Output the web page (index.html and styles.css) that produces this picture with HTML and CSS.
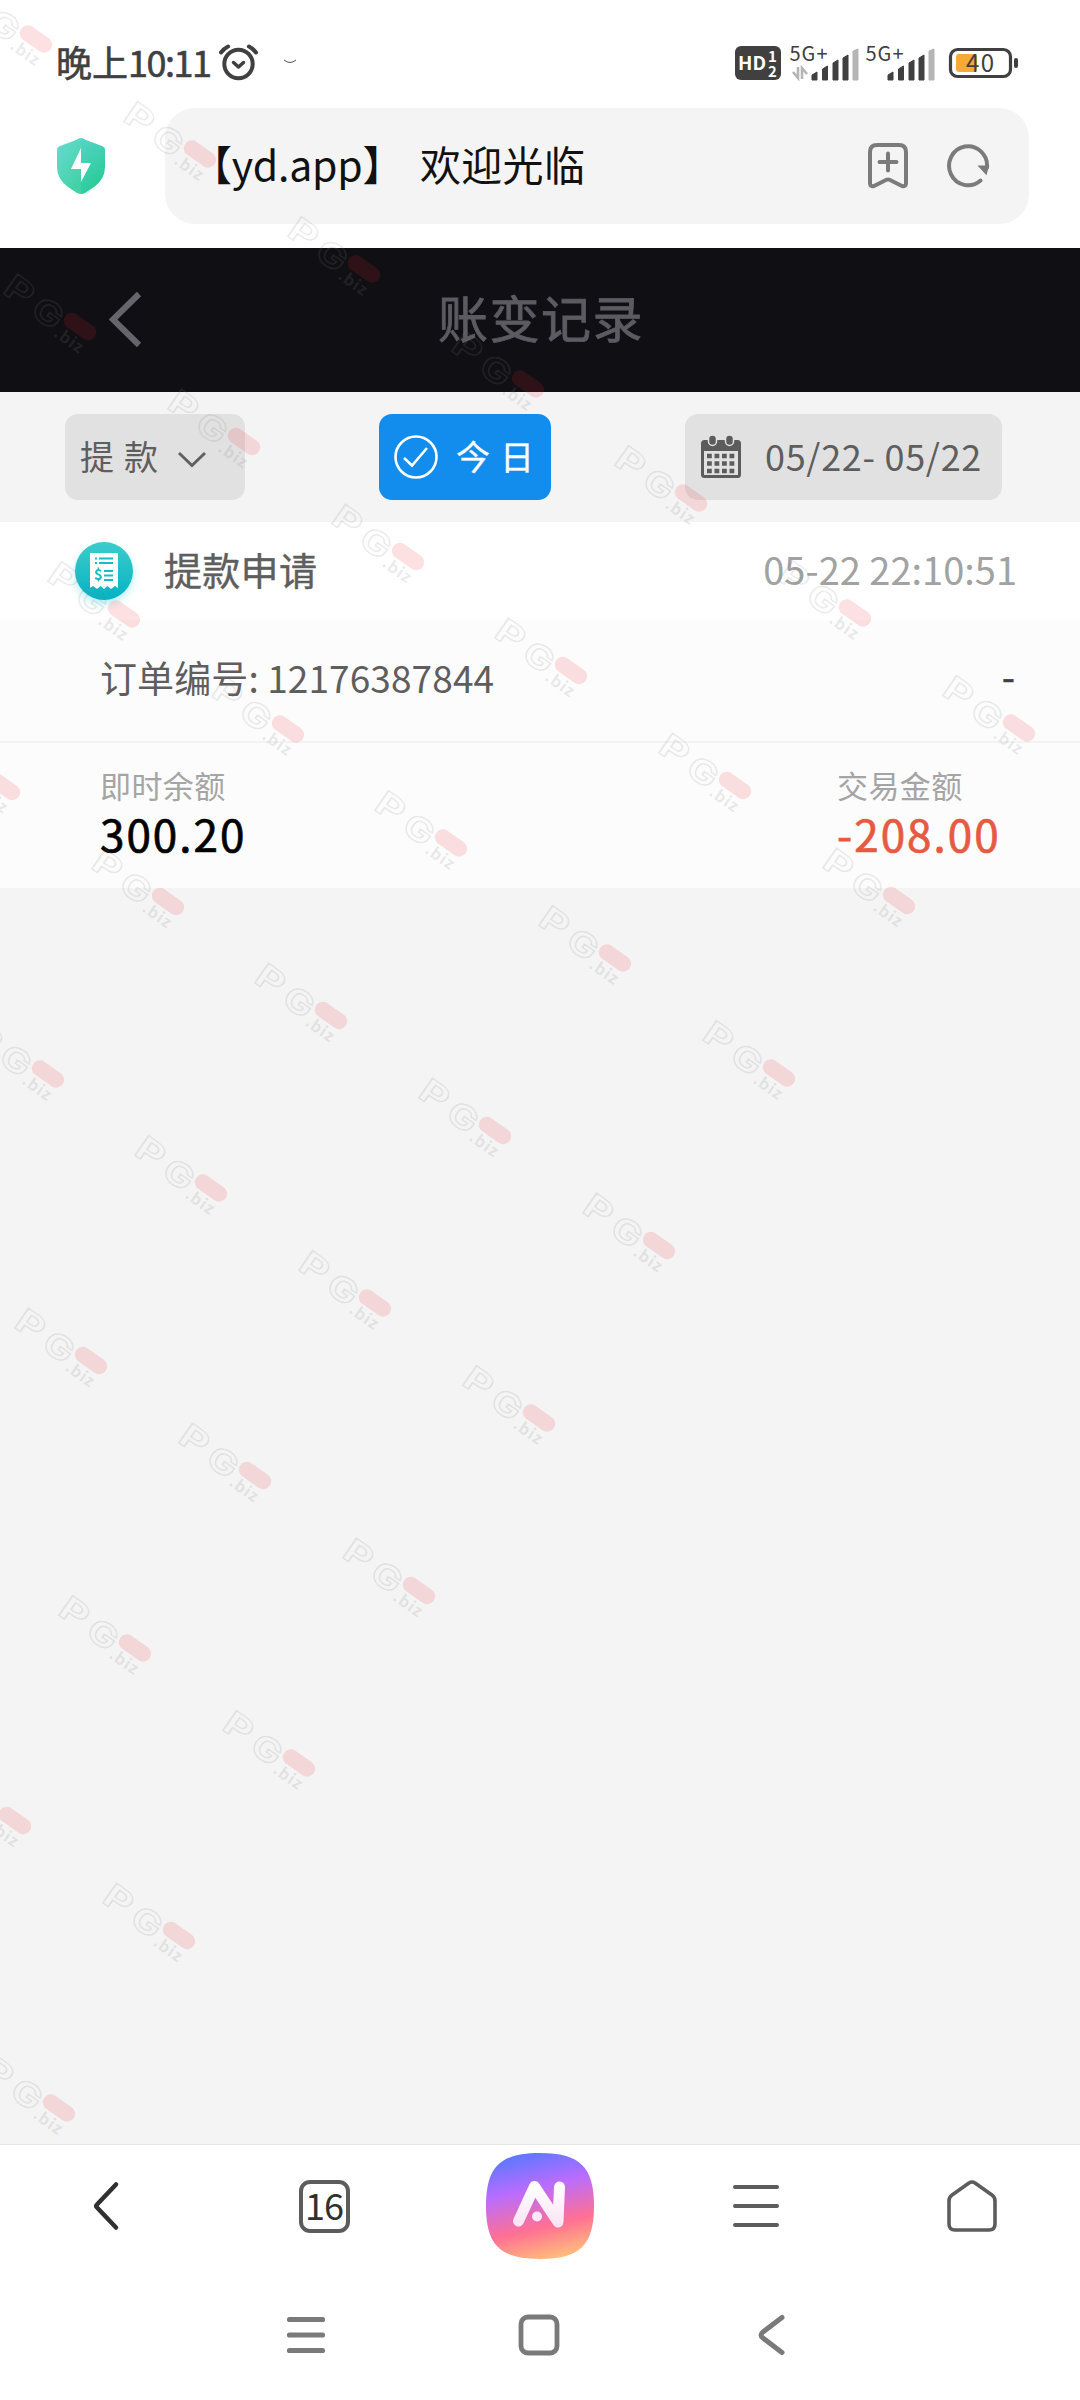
FILE: index.html
```html
<!DOCTYPE html>
<html lang="zh-CN">
<head>
<meta charset="utf-8">
<title>账变记录</title>
<link rel="stylesheet" href="styles.css">
</head>
<body>
<div class="screen">
  <header class="status">
    <span class="clock"><span>晚上</span><span class="digits">10:11</span></span>
    <svg class="alarm" width="40" height="38" viewBox="218 44 40 38" fill="none" stroke="#404040" stroke-linecap="round" stroke-linejoin="round">
      <circle cx="238.500" cy="64" r="14.200" stroke-width="4"/>
      <path d="M233.500 62.500l5 4.500 5-4.500" stroke-width="3.500"/>
      <path d="M221 52.500q3-4 7-6M256 52.500q-3-4-7-6" stroke-width="4"/>
    </svg>
    <svg class="squiggle" width="14" height="6" viewBox="0 0 14 6" fill="none" stroke="#555"><path d="M1 1q6 5 12 0"/></svg>
    <svg class="indicators" width="286" height="40" viewBox="734 43 286 40">
      <rect x="735" y="46" width="46" height="34" rx="6" fill="#404040"/>
      <g class="hd">
        <text x="738" y="70" font-size="18" textLength="28" lengthAdjust="spacingAndGlyphs">HD</text>
        <text x="768" y="61.500" font-size="15">1</text>
        <text x="768" y="76.500" font-size="15">2</text>
      </g>
      <path d="M798 67v11l-5-6M802 79v-11l5 6" fill="none" stroke="#b5b5b5" stroke-width="2.600"/>
      <g id="signal">
        <text class="net" x="789.500" y="60.500" font-size="20" textLength="38">5G+</text>
        <path fill="#404040" d="M812 80v-5l5-3v8zM822.500 80V69l5-3v14zM833 80V63l5-3v20zM843 80V58l5-3v25z" stroke="#404040" stroke-linejoin="round"/>
        <path fill="#b5b5b5" d="M853 80V51l5-2v31z" stroke="#b5b5b5"/>
      </g>
      <use href="#signal" x="76"/>
      <rect x="950.500" y="49.500" width="60" height="27" rx="7" fill="none" stroke="#404040" stroke-width="3.200"/>
      <rect x="956" y="54" width="21" height="18" rx="3" fill="#f5a937"/>
      <rect x="1014" y="58" width="4" height="10" rx="2" fill="#404040"/>
      <text class="net" x="966" y="72" font-size="24" textLength="28">40</text>
    </svg>
  </header>

  <div class="browser">
    <svg class="shield" width="48" height="58" viewBox="0 0 48 58">
      <defs><linearGradient id="sh" x1="0" y1="0" x2=".6" y2="1"><stop offset="0" stop-color="#67dcd3"/><stop offset="1" stop-color="#43d1a6"/></linearGradient>
      <linearGradient id="sh2" x1="0" y1="0" x2=".4" y2="1"><stop offset="0" stop-color="#55d4c8"/><stop offset="1" stop-color="#2acb97"/></linearGradient></defs>
      <path d="M24 1Q22 1 19 3L3 9Q0 10 0 13V30Q0 42 11 50L20 56Q22 57 24 57z" fill="url(#sh)"/>
      <path d="M24 1Q26 1 29 3L45 9Q48 10 48 13V30Q48 42 37 50L28 56Q26 57 24 57z" fill="url(#sh2)"/>
      <path d="M24 11L14 32h10v13L34 26H24z" fill="#fff"/>
    </svg>
    <div class="address">
      <span class="url">【yd.app】</span><span class="site">欢迎光临</span>
      <svg width="42" height="48" viewBox="867 142 42 48" fill="none" stroke="#7b7b7b" stroke-width="4" stroke-linejoin="round" stroke-linecap="round">
        <path d="M870 183V152q0-7 7-7h22q7 0 7 7v31q0 4-4 3l-10-5q-4-3-8 0l-10 5q-4 1-4-3zM879.500 162h17M888 153.500v17"/>
      </svg>
      <svg class="reload" width="46" height="46" viewBox="945 143 46 46" fill="none" stroke="#7b7b7b" stroke-width="4" stroke-linecap="round">
        <path d="M980.500 180.500a19 19.500 0 1 1 6.500-13"/>
        <path d="M979.500 166.500h8.500l-2 7z" fill="#7b7b7b" stroke-width="1.800"/>
      </svg>
    </div>
  </div>

  <nav class="titlebar">
    <svg width="34" height="58" viewBox="0 0 34 58" fill="none" stroke="#66656b" stroke-width="6"><path d="M31 3L5 28.500 31 54"/></svg>
    <h1>账变记录</h1>
  </nav>

  <section class="filters">
    <button class="filter type"><span>提款</span>
      <svg width="30" height="18" viewBox="0 0 30 18" fill="none" stroke="#606060" stroke-width="3"><path d="M2 2l13 12.500L28 2"/></svg>
    </button>
    <button class="filter today">
      <svg width="46" height="46" viewBox="0 0 46 46" fill="none" stroke="#fff" stroke-width="2.600"><circle cx="23" cy="23" r="20.500"/><path d="M11 24l8 7.500 15-17.500"/></svg>
      <span>今日</span>
    </button>
    <button class="filter range">
      <svg width="40" height="44" viewBox="0 0 40 44">
        <rect x="1.500" y="6.500" width="37" height="35" rx="2" fill="none" stroke="#5c5c5c" stroke-width="3"/>
        <path d="M1 7h38v9H1z" fill="#5c5c5c"/>
        <rect x="7.500" y="0" width="8" height="10.500" rx="4" fill="#5c5c5c" stroke="#e1e1e1" stroke-width="1.500"/>
        <rect x="24.500" y="0" width="8" height="10.500" rx="4" fill="#5c5c5c" stroke="#e1e1e1" stroke-width="1.500"/>
        <path d="M6 21h28M6 28.500h28M6 36h28" stroke="#5c5c5c" stroke-width="4.500" stroke-dasharray="4.800 2.700"/>
      </svg>
      <span>05/22- 05/22</span>
    </button>
  </section>

  <article class="record">
    <header class="head">
      <svg class="receipt" width="76" height="76" viewBox="0 0 76 76">
        <defs><linearGradient id="rc" x1="0" y1="0" x2="0" y2="1"><stop offset="0" stop-color="#3cccca"/><stop offset="1" stop-color="#06b2c4"/></linearGradient></defs>
        <circle cx="38" cy="38" r="29" fill="url(#rc)"/>
        <path d="M24 20h28v35l-3-2-4 3-3.500-3-3.500 3-3.500-3-3.500 3-4-3-3 2z" fill="#fff"/>
        <path d="M29 25.500h2M33 25.500h14M29 30h2M33 30h14M38 38h9M38 42.500h9M38 47h9" stroke="#19bcc7" stroke-width="2"/>
        <text x="28" y="47" font-size="15">$</text>
      </svg>
      <h2>提款申请</h2>
      <time>05-22 22:10:51</time>
    </header>
    <div class="order"><span>订单编号: 12176387844</span><span class="dash">-</span></div>
    <div class="amounts">
      <dl><dt>即时余额</dt><dd>300.20</dd></dl>
      <dl class="trade"><dt>交易金额</dt><dd>-208.00</dd></dl>
    </div>
  </article>

  <main class="blank"></main>

  <nav class="toolbar">
    <div><svg width="54" height="54" viewBox="81 2180 54 54" fill="none" stroke="#303030" stroke-width="4.500" stroke-linecap="round" stroke-linejoin="round"><path d="M116 2185.500l-19 20q-1.500 1.500 0 3l19 20"/></svg></div>
    <div><span class="tabs">16</span></div>
    <div><svg width="108" height="106" viewBox="0 0 108 106">
      <defs><linearGradient id="ai" x1=".35" y1="0" x2=".6" y2="1"><stop offset="0" stop-color="#5d78ff"/><stop offset=".33" stop-color="#b96cff"/><stop offset=".7" stop-color="#ff7093"/><stop offset="1" stop-color="#ffbc7c"/></linearGradient>
      <linearGradient id="aw" x1="0" y1="0" x2="0" y2="1"><stop offset="0" stop-color="#fff"/><stop offset="1" stop-color="#fbe5f5"/></linearGradient></defs>
      <path d="M54 0C94 0 108 14 108 53S94 106 54 106 0 92 0 53 14 0 54 0z" fill="url(#ai)"/>
      <path d="M32.500 68L48.500 33.500 72 69 73.500 34" fill="none" stroke="url(#aw)" stroke-width="11" stroke-linecap="round" stroke-linejoin="round"/>
      <circle cx="51" cy="63.500" r="5" fill="#fbe8f8"/>
    </svg></div>
    <div><svg width="48" height="44" viewBox="0 0 48 44" stroke="#5c5c5c" stroke-width="4" stroke-linecap="round"><path d="M3 3h42M3 22h42M3 41h42"/></svg></div>
    <div><svg width="52" height="54" viewBox="0 0 52 54" fill="none" stroke="#5c5c5c" stroke-width="3.600" stroke-linejoin="round"><path d="M3 22q0-4 3-6L23 4q3-2 6 0l17 12q3 2 3 6v23q0 6-6 6H9q-6 0-6-6z"/></svg></div>
  </nav>

  <footer class="system" aria-label="navigation">
    <div><svg width="40" height="38" viewBox="0 0 40 38" stroke="#7a7a7a" stroke-width="5.200" stroke-linecap="round"><path d="M3.500 3.500h33M3.500 19h33M3.500 34.500h33"/></svg></div>
    <div><svg width="42" height="42" viewBox="0 0 42 42" fill="none" stroke="#7a7a7a" stroke-width="4.800"><rect x="3" y="3" width="36" height="36" rx="7"/></svg></div>
    <div><svg width="28" height="42" viewBox="0 0 28 42" fill="none" stroke="#7a7a7a" stroke-width="5" stroke-linecap="round"><path d="M24 3.500L5 18q-4 3 0 6l19 14.500"/></svg></div>
  </footer>

  <svg class="watermarks" width="1080" height="2400" viewBox="0 0 1080 2400" aria-hidden="true">
    <defs>
      <g id="mark">
        <g transform="rotate(35)">
          <text class="logo" x="-84" y="17" font-size="33" textLength="28" lengthAdjust="spacingAndGlyphs">P</text>
          <text class="logo" x="-49" y="19" font-size="33" textLength="30" lengthAdjust="spacingAndGlyphs">G</text>
          <rect x="-18" y="-8" width="36" height="16" rx="8" fill="#f02035" fill-opacity=".14"/>
          <text class="biz" x="-17" y="23" font-size="16">.biz</text>
        </g>
      </g>
      <g id="row">
        <use href="#mark" x="36" y="39"/>
        <use href="#mark" x="200" y="154"/>
        <use href="#mark" x="364" y="269"/>
        <use href="#mark" x="528" y="384"/>
        <use href="#mark" x="691" y="498"/>
        <use href="#mark" x="855" y="613"/>
        <use href="#mark" x="1019" y="728"/>
      </g>
    </defs>
    <use href="#row"/>
    <use href="#row" x="-120" y="172.500"/>
    <use href="#row" x="-240" y="345"/>
    <use href="#row" x="-360" y="517.500"/>
    <use href="#row" x="-480" y="690"/>
    <use href="#row" x="-600" y="862.500"/>
    <use href="#row" x="-720" y="1035"/>
    <use href="#row" x="-840" y="1207.500"/>
    <use href="#row" x="-960" y="1380"/>
  </svg>
</div>
</body>
</html>
```
FILE: styles.css
```css
* { box-sizing: border-box; margin: 0; padding: 0; }
body { background: #fff; font-family: "Noto Sans CJK SC", "Noto Sans", sans-serif; }
svg { display: block; flex: none; }
.screen { position: relative; width: 1080px; height: 2400px; overflow: hidden; display: flex; flex-direction: column; color: #5e5e5e; }

.status { height: 108px; padding: 0 60px 0 56px; display: flex; align-items: flex-start; }
.clock { display: flex; width: 162px; margin-top: 34px; font-size: 36px; line-height: 54px; color: #404040; white-space: nowrap; -webkit-text-stroke: .6px #404040; }
.clock .digits { letter-spacing: -1.5px; }
.alarm { margin-top: 44px; }
.squiggle { margin: 59px 0 0 25px; }
.indicators { margin: 43px 0 0 auto; }
.hd { fill: #fff; font-weight: 700; }
.net { fill: #404040; }

.browser { height: 140px; padding: 0 51px 24px 57px; display: flex; align-items: center; }
.address { margin-left: 60px; width: 864px; height: 116px; border-radius: 30px; background: #f4f4f4; display: flex; align-items: center; padding: 0 38px 0 26px; font-size: 41px; color: #111; white-space: nowrap; }
.url, .site { padding-bottom: 6px; }
.url { letter-spacing: -.2px; width: 229px; }
.site { margin-right: auto; letter-spacing: .3px; }
.reload { margin-left: 36px; }

.titlebar { height: 144px; background: #101014; display: grid; grid-template-columns: 34px 1fr 34px; align-items: center; padding: 0 106px 0 108px; }
.titlebar h1 { padding-bottom: 8px; text-align: center; font-size: 50px; font-weight: 400; letter-spacing: 1.5px; color: #5c5b61; -webkit-text-stroke: .8px #5c5b61; }

.filters { height: 130px; padding: 22px 78px 22px 65px; background: #f4f4f4; display: flex; justify-content: space-between; }
.filter { border: 0; border-radius: 13px; height: 86px; background: #e1e1e1; color: #5e5e5e; font: inherit; font-size: 34px; display: flex; align-items: center; white-space: nowrap; }
.filter span { padding-bottom: 4px; }
.type { width: 180px; padding-left: 15px; }
.type span { letter-spacing: 10px; }
.type svg { margin: 6px 0 0 9px; }
.today { width: 172px; padding-left: 14px; background: #128ced; color: #fff; }
.today span { margin-left: 17px; letter-spacing: 10px; -webkit-text-stroke: .3px #fff; }
.range { width: 317px; padding-left: 16px; font-size: 36px; }
.range span { margin-left: 24px; letter-spacing: .7px; }

.record { height: 366px; background: #fcfcfc; }
.head { height: 98px; padding: 0 63px 0 66px; background: #fff; display: flex; align-items: center; }
.receipt { filter: drop-shadow(0 4px 4px #b5eef5); }
.receipt text { fill: #19bcc7; font-weight: 700; }
.head h2, .head time { padding-bottom: 6px; }
.head h2 { margin-left: 22px; font-size: 38px; font-weight: 400; letter-spacing: .3px; -webkit-text-stroke: .4px #5e5e5e; }
.head time { margin-left: auto; font-size: 38px; letter-spacing: 0; color: #a2a2a2; }
.order { height: 123px; padding: 0 65px 8px 100px; border-bottom: 2px solid #f3f3f3; display: flex; align-items: center; justify-content: space-between; font-size: 37px; letter-spacing: .1px; }
.dash { color: #404040; -webkit-text-stroke: .6px #404040; padding-bottom: 4px; }
.amounts { display: flex; justify-content: space-between; padding: 18px 0 0 100px; }
.trade { width: 243px; }
dt { font-size: 31px; line-height: 48px; letter-spacing: .4px; color: #a5a5a5; }
dd { font-size: 44px; line-height: 49px; letter-spacing: 2px; color: #000; -webkit-text-stroke: .7px currentColor; }
.trade dd { color: #e65a43; }

.blank { flex: 1; background: #f4f4f4; }
.toolbar { height: 126px; padding-bottom: 3px; border-top: 1px solid #e4e4e0; display: grid; grid-template-columns: repeat(5, 216px); align-items: center; justify-items: center; }
.tabs { display: flex; width: 51px; height: 53px; padding-bottom: 5px; align-items: center; justify-content: center; border: 4px solid #5c5c5c; border-radius: 11px; font-size: 36px; line-height: 36px; color: #303030; letter-spacing: -1px; }
.system { height: 130px; padding: 0 191px 0 189px; display: grid; grid-template-columns: repeat(3, 233px); align-items: center; justify-items: center; }

.watermarks { position: absolute; left: 0; top: 0; pointer-events: none; }
.logo { fill: none; stroke: #808080; stroke-opacity: .17; stroke-width: 1.4px; font-family: Inter, sans-serif; font-weight: 700; }
.biz { fill: #808080; fill-opacity: .17; font-weight: 700; letter-spacing: 1px; }
```
